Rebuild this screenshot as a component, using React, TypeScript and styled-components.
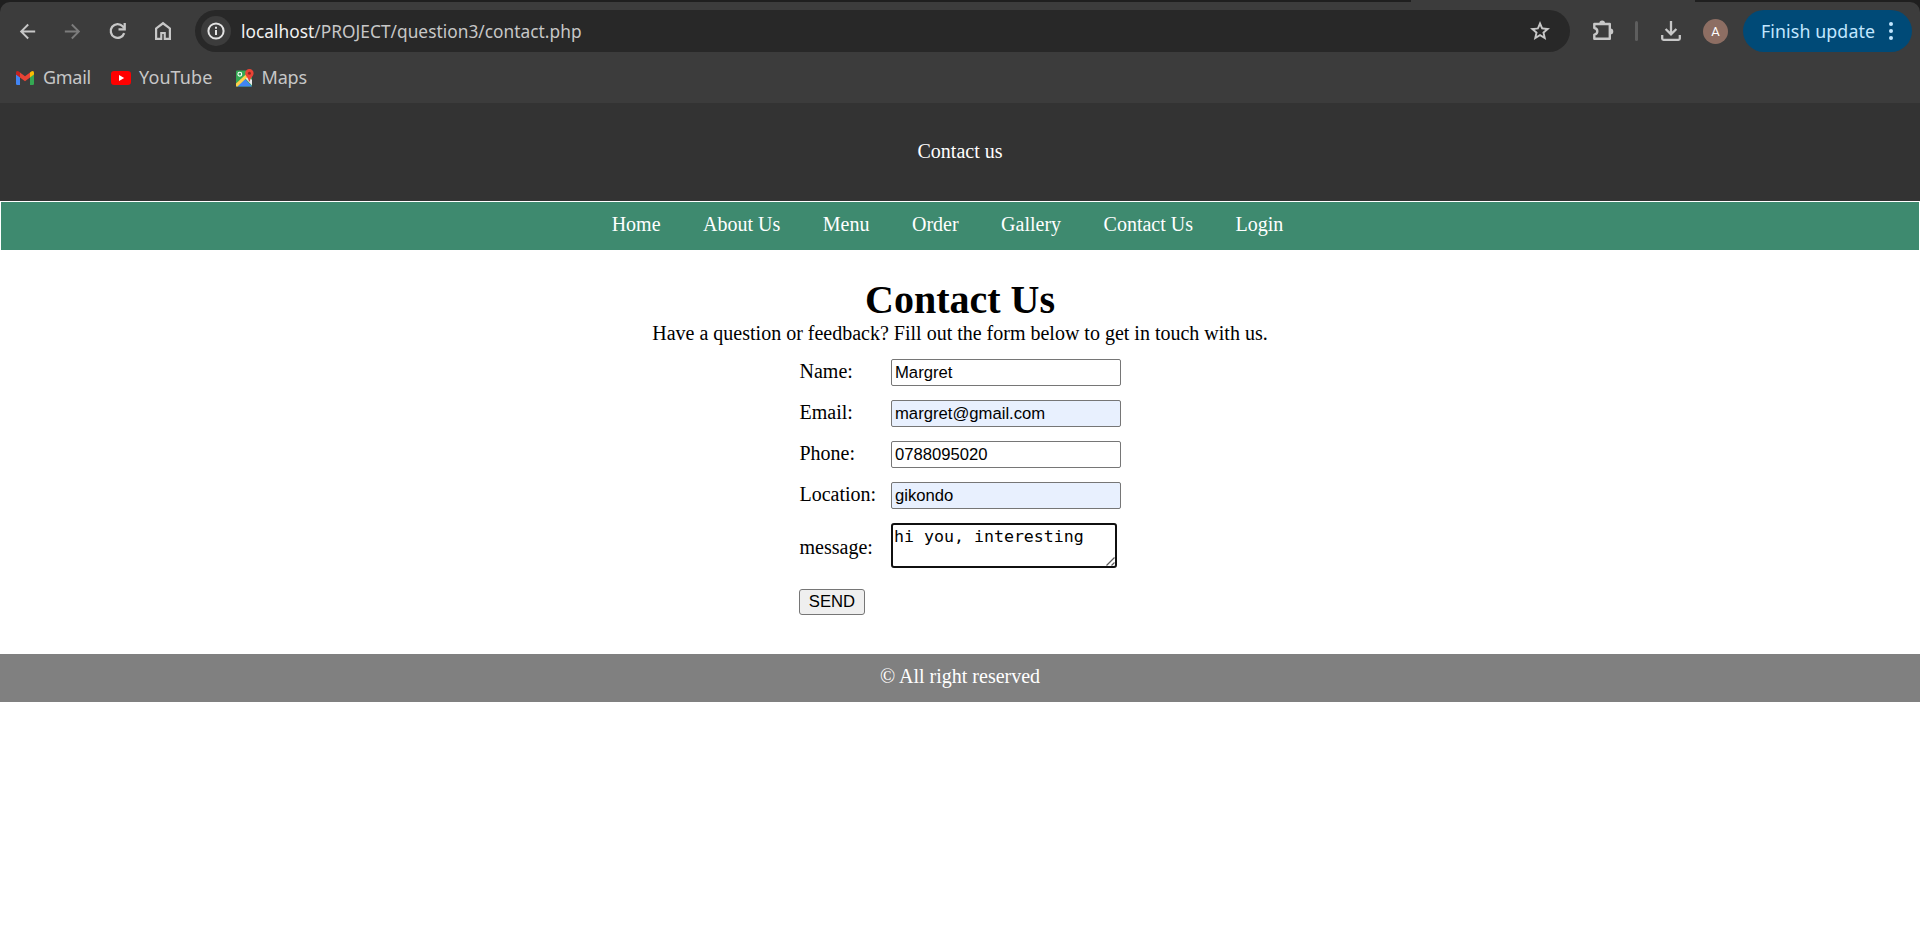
import React from 'react';
import styled, { createGlobalStyle } from 'styled-components';

const GlobalStyle = createGlobalStyle`
  * { box-sizing: border-box; }
  body {
    margin: 0;
    background: #fff;
    font-family: "Liberation Serif", "Times New Roman", serif;
    font-size: 20px;
    line-height: 23px;
    color: #000;
  }
`;

const Screen = styled.div`
  height: 928px;
  overflow: hidden;
`;

/* Browser chrome */

const Chrome = styled.div`
  height: 103px;
  background: #1f1f1f;
  font-family: "Noto Sans", "Open Sans", sans-serif;
`;

const TabStrip = styled.div`
  height: 2px;
  display: flex;
  justify-content: flex-end;
  padding-right: 225px;
`;

const ActiveTab = styled.div`
  width: 284px;
  background: #3c3c3c;
`;

const ToolbarPanel = styled.div`
  height: 101px;
  background: #3c3c3c;
  border-radius: 10px 10px 0 0;
`;

const Toolbar = styled.div`
  display: flex;
  align-items: center;
  height: 58px;
  padding: 0 8px 0 5px;
`;

const IconButton = styled.div<{ $width?: number; $color?: string }>`
  display: flex;
  align-items: center;
  justify-content: center;
  width: ${(p) => p.$width ?? 45}px;
  height: 42px;
  flex: none;
  color: ${(p) => p.$color ?? '#c7c7c7'};
  svg { display: block; }
`;

const AddressBar = styled.div`
  display: flex;
  align-items: center;
  flex: none;
  width: 1375px;
  height: 42px;
  margin-left: 10px;
  padding: 0 18px 0 6px;
  border-radius: 21px;
  background: #282828;
`;

const SiteInfo = styled.div`
  display: flex;
  align-items: center;
  justify-content: center;
  width: 30px;
  height: 30px;
  border-radius: 50%;
  background: #3c3c3c;
  color: #e3e3e3;
`;

const Url = styled.div`
  flex: 1;
  margin-left: 10px;
  padding-top: 1px;
  font-size: 17.3px;
  letter-spacing: 0.03px;
  line-height: 24px;
  color: #c7c7c7;
  white-space: nowrap;
  span { color: #f2f2f2; }
`;

const Divider = styled.div`
  flex: none;
  width: 3px;
  height: 20px;
  border-radius: 1.5px;
  background: #5e5e5e;
`;

const Avatar = styled.div`
  display: flex;
  flex: none;
  align-items: center;
  justify-content: center;
  width: 25px;
  height: 25px;
  margin-right: 15px;
  border-radius: 50%;
  background: #8d6e63;
  color: #fff;
  font-family: Roboto, sans-serif;
  font-size: 13px;
`;

const UpdateButton = styled.div`
  display: flex;
  flex: none;
  align-items: center;
  justify-content: space-between;
  width: 169px;
  height: 42px;
  padding: 0 19px 0 18px;
  border-radius: 21px;
  background: #004a77;
  color: #c2e7ff;
  font-size: 17.8px;
  letter-spacing: 0.1px;
  white-space: nowrap;
`;

const Bookmarks = styled.div`
  display: flex;
  align-items: center;
  height: 35px;
  padding-left: 16px;
`;

const Bookmark = styled.div<{ $width: number; $gap: number; $spacing: number }>`
  display: flex;
  align-items: center;
  gap: ${(p) => p.$gap}px;
  width: ${(p) => p.$width}px;
  font-size: 18px;
  letter-spacing: ${(p) => p.$spacing}px;
  color: #c7c7c7;
  white-space: nowrap;
  svg { display: block; flex: none; }
`;

/* Page */

const Banner = styled.header`
  display: flex;
  align-items: center;
  justify-content: center;
  height: 98px;
  padding-bottom: 1px;
  background: #333;
  color: #fff;
`;

const Nav = styled.nav`
  display: flex;
  justify-content: center;
  gap: 42.5px;
  height: 49px;
  padding: 11px 25px 0 0;
  border: solid #fff;
  border-width: 1px 1px 0;
  background: #3e8a6f;
`;

const NavLink = styled.a`
  color: #fff;
  text-decoration: none;
`;

const Main = styled.main`
  display: flex;
  flex-direction: column;
  align-items: center;
  height: 404px;
  padding-top: 27px;
`;

const Title = styled.h1`
  margin: 0;
  font-size: 40px;
  line-height: 45px;
`;

const Lead = styled.p`
  margin: 0;
`;

const Form = styled.form`
  display: grid;
  grid-template-columns: 92px 230px;
  row-gap: 14px;
  align-items: center;
  margin-top: 14px;
`;

const Label = styled.label<{ $low?: boolean }>`
  display: block;
  padding: ${(p) => (p.$low ? '4px 0 0 0.5px' : '0 0 2px 0.5px')};
`;

const Input = styled.input<{ $autofilled?: boolean }>`
  width: 230px;
  height: 27px;
  margin: 0;
  padding: 1px 3px;
  border: 1px solid #767676;
  border-radius: 2px;
  outline: none;
  background: ${(p) => (p.$autofilled ? '#e8f0fe' : '#fff')};
  color: #000;
  font-family: "Liberation Sans", Arial, sans-serif;
  font-size: 16.667px;
`;

const MessageBox = styled.div`
  position: relative;
  width: 226px;
  height: 45px;
`;

const TextArea = styled.textarea`
  display: block;
  width: 226px;
  height: 45px;
  margin: 0;
  padding: 2px 1px;
  border: 2px solid #101010;
  border-radius: 3px;
  outline: none;
  resize: none;
  overflow: hidden;
  background: #fff;
  color: #000;
  font-family: "DejaVu Sans Mono", monospace;
  font-size: 16.6px;
  line-height: 19px;
`;

const Grip = styled.svg`
  position: absolute;
  right: 2px;
  bottom: 2px;
`;

const SendButton = styled.button`
  width: 66px;
  height: 26px;
  margin: 7px 0 0;
  padding: 0;
  border: 1px solid #767676;
  border-radius: 3px;
  background: #efefef;
  color: #000;
  font-family: "Liberation Sans", Arial, sans-serif;
  font-size: 16.667px;
`;

const Footer = styled.footer`
  height: 48px;
  padding-top: 11px;
  background: #808080;
  color: #fff;
  text-align: center;
`;

const Icon = ({ d, size = 24 }: { d: string; size?: number }) => (
  <svg width={size} height={size} viewBox="0 0 24 24" fill="currentColor">
    <path d={d} />
  </svg>
);

const BACK = 'M20 11H7.83l5.59-5.59L12 4l-8 8 8 8 1.41-1.41L7.83 13H20v-2z';
const FORWARD = 'M12 4l-1.41 1.41L16.17 11H4v2h12.17l-5.58 5.59L12 20l8-8z';
const HOME = 'M6.200 18.800h3V13h5.600v5.800h3v-8.700L12 5.700l-5.800 4.400v8.700zM4 21V9l8-6.200L20 9v12h-7.300v-5.900h-1.400V21H4z';
const STAR =
  'M22 9.24l-7.19-.62L12 2 9.19 8.63 2 9.24l5.46 4.73L5.82 21 12 17.27 18.18 21l-1.63-7.03L22 9.24zM12 15l-3.300 2 .9-3.800-2.900-2.500 3.800-.35L12 6.900l1.500 3.450 3.800.35-2.900 2.500.9 3.800L12 15z';

const ReloadIcon = () => (
  <svg width="24" height="24" viewBox="0 0 24 24" fill="none" stroke="currentColor" strokeWidth="2.3">
    <path d="M18.200 14.200A6.900 6.900 0 1 1 16.700 7.300L18.200 9" />
    <path d="M18.700 4v6.300h-6.200" />
  </svg>
);

const InfoIcon = () => (
  <svg width="18" height="18" viewBox="0 0 18 18" fill="none" stroke="currentColor" strokeWidth="2">
    <circle cx="9" cy="9" r="7.6" />
    <path d="M9 8v5M9 4.8v2" />
  </svg>
);

const PuzzleIcon = () => (
  <svg width="22" height="22" viewBox="0 0 22 22">
    <path
      d="M2.500 4h15.300v14.800H2.300v-4.200c4-.6 4-6 0-6.600V4z"
      fill="none"
      stroke="#c7c7c7"
      strokeWidth="2.4"
      strokeLinejoin="round"
    />
    <path d="M7.400 3.400a2.800 2.800 0 0 1 5.600 0zM18.400 8.500a2.900 2.900 0 0 1 0 5.800z" fill="#c7c7c7" />
  </svg>
);

const DownloadIcon = () => (
  <svg width="20" height="20" viewBox="0 0 20 20" fill="none" stroke="currentColor" strokeWidth="2.3">
    <path d="M10 0v13M4.600 8l5.400 5.400L15.400 8M1.200 14v3.500q0 1.300 1.300 1.300h15q1.300 0 1.300-1.300V14" />
  </svg>
);

const DotsIcon = () => (
  <svg width="4" height="18" viewBox="0 0 4 18" fill="currentColor">
    <circle cx="2" cy="2" r="2" />
    <circle cx="2" cy="9" r="2" />
    <circle cx="2" cy="16" r="2" />
  </svg>
);

const GmailIcon = () => (
  <svg width="18" height="14" viewBox="0 0 18 14">
    <path d="M0 3l4 3v8H1.200Q0 14 0 12.800z" fill="#4285f4" />
    <path d="M18 3l-4 3v8h2.800q1.200 0 1.200-1.200z" fill="#34a853" />
    <path d="M14 1.500L15.200.5Q18-1 18 2v1.500L14 6.500z" fill="#fbbc04" />
    <path d="M4 1.500L9 5.200l5-3.700v5L9 10.200 4 6.500z" fill="#ea4335" />
    <path d="M4 1.500L2.800.5Q0-1 0 2v1.500l4 3z" fill="#c5221f" />
  </svg>
);

const YouTubeIcon = () => (
  <svg width="20" height="14" viewBox="0 0 20 14">
    <rect width="20" height="14" rx="3.300" fill="#f00" />
    <path d="M8 4l5.200 3L8 10z" fill="#fff" />
  </svg>
);

const MapsIcon = () => (
  <svg width="18" height="18" viewBox="0 0 18 18">
    <rect x="0" y="1.500" width="16" height="16" rx="1" fill="#34a853" />
    <path d="M1 17.500L9 10l7 7.500z" fill="#4285f4" />
    <path d="M9.500 9.500L12 7l4 4v5.500z" fill="#e8eaed" />
    <path d="M0 14.500L9.800 5.500l2.200 2L1.500 17.500H0z" fill="#ffd04b" />
    <circle cx="3.800" cy="5.200" r="1.900" fill="none" stroke="#fff" strokeWidth="1.100" />
    <path d="M13.400 0a4.200 4.200 0 0 1 4.200 4.200c0 3-3.400 4.300-3.700 8.300h-1c-.3-4-3.700-5.300-3.700-8.300A4.200 4.200 0 0 1 13.400 0z" fill="#ea4335" />
    <circle cx="13.400" cy="4.200" r="1.500" fill="#8c2a22" />
  </svg>
);

const links = ['Home', 'About Us', 'Menu', 'Order', 'Gallery', 'Contact Us', 'Login'];

const fields = [
  { label: 'Name:', value: 'Margret', autofilled: false },
  { label: 'Email:', value: 'margret@gmail.com', autofilled: true },
  { label: 'Phone:', value: '0788095020', autofilled: false },
  { label: 'Location:', value: 'gikondo', autofilled: true },
];

export default function App() {
  return (
    <Screen>
      <GlobalStyle />
      <Chrome>
        <TabStrip>
          <ActiveTab />
        </TabStrip>
        <ToolbarPanel>
          <Toolbar>
            <IconButton><Icon d={BACK} size={23} /></IconButton>
            <IconButton $color="#7c7c7c"><Icon d={FORWARD} size={23} /></IconButton>
            <IconButton><ReloadIcon /></IconButton>
            <IconButton><Icon d={HOME} /></IconButton>
            <AddressBar>
              <SiteInfo><InfoIcon /></SiteInfo>
              <Url><span>localhost</span>/PROJECT/question3/contact.php</Url>
              <IconButton $width={24}><Icon d={STAR} /></IconButton>
            </AddressBar>
            <IconButton $width={65}><PuzzleIcon /></IconButton>
            <Divider />
            <IconButton $width={65}><DownloadIcon /></IconButton>
            <Avatar>A</Avatar>
            <UpdateButton>
              Finish update
              <DotsIcon />
            </UpdateButton>
          </Toolbar>
          <Bookmarks>
            <Bookmark $width={95} $gap={9} $spacing={-0.3}><GmailIcon />Gmail</Bookmark>
            <Bookmark $width={125} $gap={8} $spacing={0.1}><YouTubeIcon />YouTube</Bookmark>
            <Bookmark $width={80} $gap={7.5} $spacing={-0.2}><MapsIcon />Maps</Bookmark>
          </Bookmarks>
        </ToolbarPanel>
      </Chrome>
      <Banner>Contact us</Banner>
      <Nav>
        {links.map((link) => (
          <NavLink key={link}>{link}</NavLink>
        ))}
      </Nav>
      <Main>
        <Title>Contact Us</Title>
        <Lead>Have a question or feedback? Fill out the form below to get in touch with us.</Lead>
        <Form>
          {fields.map((f) => (
            <React.Fragment key={f.label}>
              <Label>{f.label}</Label>
              <Input defaultValue={f.value} $autofilled={f.autofilled} />
            </React.Fragment>
          ))}
          <Label $low>message:</Label>
          <MessageBox>
            <TextArea defaultValue="hi you, interesting" spellCheck={false} />
            <Grip width="9" height="9" viewBox="0 0 9 9" stroke="#5a5a5a" strokeWidth="1.200">
              <path d="M0.500 8.500l8-8M5.500 8.500l3-3" />
            </Grip>
          </MessageBox>
          <SendButton type="button">SEND</SendButton>
        </Form>
      </Main>
      <Footer>© All right reserved</Footer>
    </Screen>
  );
}
